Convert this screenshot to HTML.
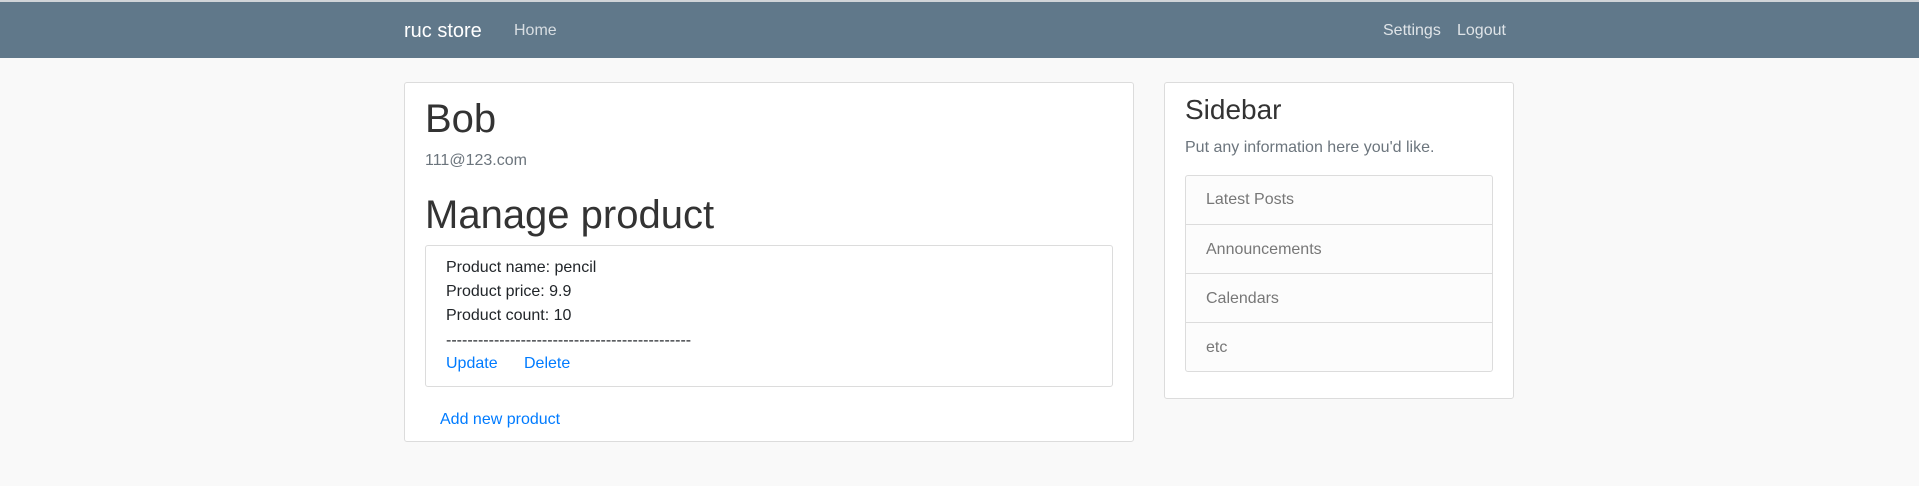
<!DOCTYPE html>
<html><head><meta charset="utf-8"><style>
*{box-sizing:border-box;margin:0;padding:0}
body{width:1919px;height:486px;background:#f9f9f9;font-family:"Liberation Sans",Arial,sans-serif;font-size:16px;color:#212529;position:relative;overflow:hidden}
.a{position:absolute;white-space:nowrap;line-height:1}
.nav{position:absolute;left:0;top:0;width:1919px;height:58px;background:#60788a;border-top:2px solid #d0d4d8}
.card{position:absolute;background:#fff;border:1px solid #dcdcdc;border-radius:3px}
.link{color:#007bff}
.li{position:absolute;left:0;width:100%;height:49px;border-top:1px solid #dcdcdc;color:#777;padding-left:20px;line-height:50px}
</style></head><body>
<div class="nav">
<div class="a" style="left:404px;top:19px;font-size:20px;color:#fff">ruc store</div>
<div class="a" style="left:514px;top:21px;color:rgba(255,255,255,.75)">Home</div>
<div class="a" style="left:1383px;top:21px;color:rgba(255,255,255,.8)">Settings</div>
<div class="a" style="left:1457px;top:21px;color:rgba(255,255,255,.8)">Logout</div>
</div>
<div class="card" style="left:404px;top:82px;width:730px;height:360px"></div>
<div class="a" style="left:425px;top:99px;font-size:40px;color:#333">Bob</div>
<div class="a" style="left:425px;top:153px;color:#6c757d">111@123.com</div>
<div class="a" style="left:425px;top:195px;font-size:40px;color:#333">Manage product</div>
<div class="card" style="left:425px;top:245px;width:688px;height:142px"></div>
<div class="a" style="left:446px;top:260px">Product name: pencil</div>
<div class="a" style="left:446px;top:284px">Product price: 9.9</div>
<div class="a" style="left:446px;top:308px">Product count: 10</div>
<div class="a" style="left:446px;top:333px">----------------------------------------------</div>
<div class="a link" style="left:446px;top:356px">Update</div>
<div class="a link" style="left:524px;top:356px">Delete</div>
<div class="a link" style="left:440px;top:412px">Add new product</div>
<div class="card" style="left:1164px;top:82px;width:350px;height:317px"></div>
<div class="a" style="left:1185px;top:96px;font-size:28px;color:#333">Sidebar</div>
<div class="a" style="left:1185px;top:140px;color:#6c757d">Put any information here you'd like.</div>
<div class="card" style="left:1185px;top:175px;width:308px;height:197px;background:#fcfcfc;overflow:hidden">
<div class="li" style="top:-1px;border-top:none">Latest Posts</div>
<div class="li" style="top:48px">Announcements</div>
<div class="li" style="top:97px">Calendars</div>
<div class="li" style="top:146px">etc</div>
</div>
</body></html>
